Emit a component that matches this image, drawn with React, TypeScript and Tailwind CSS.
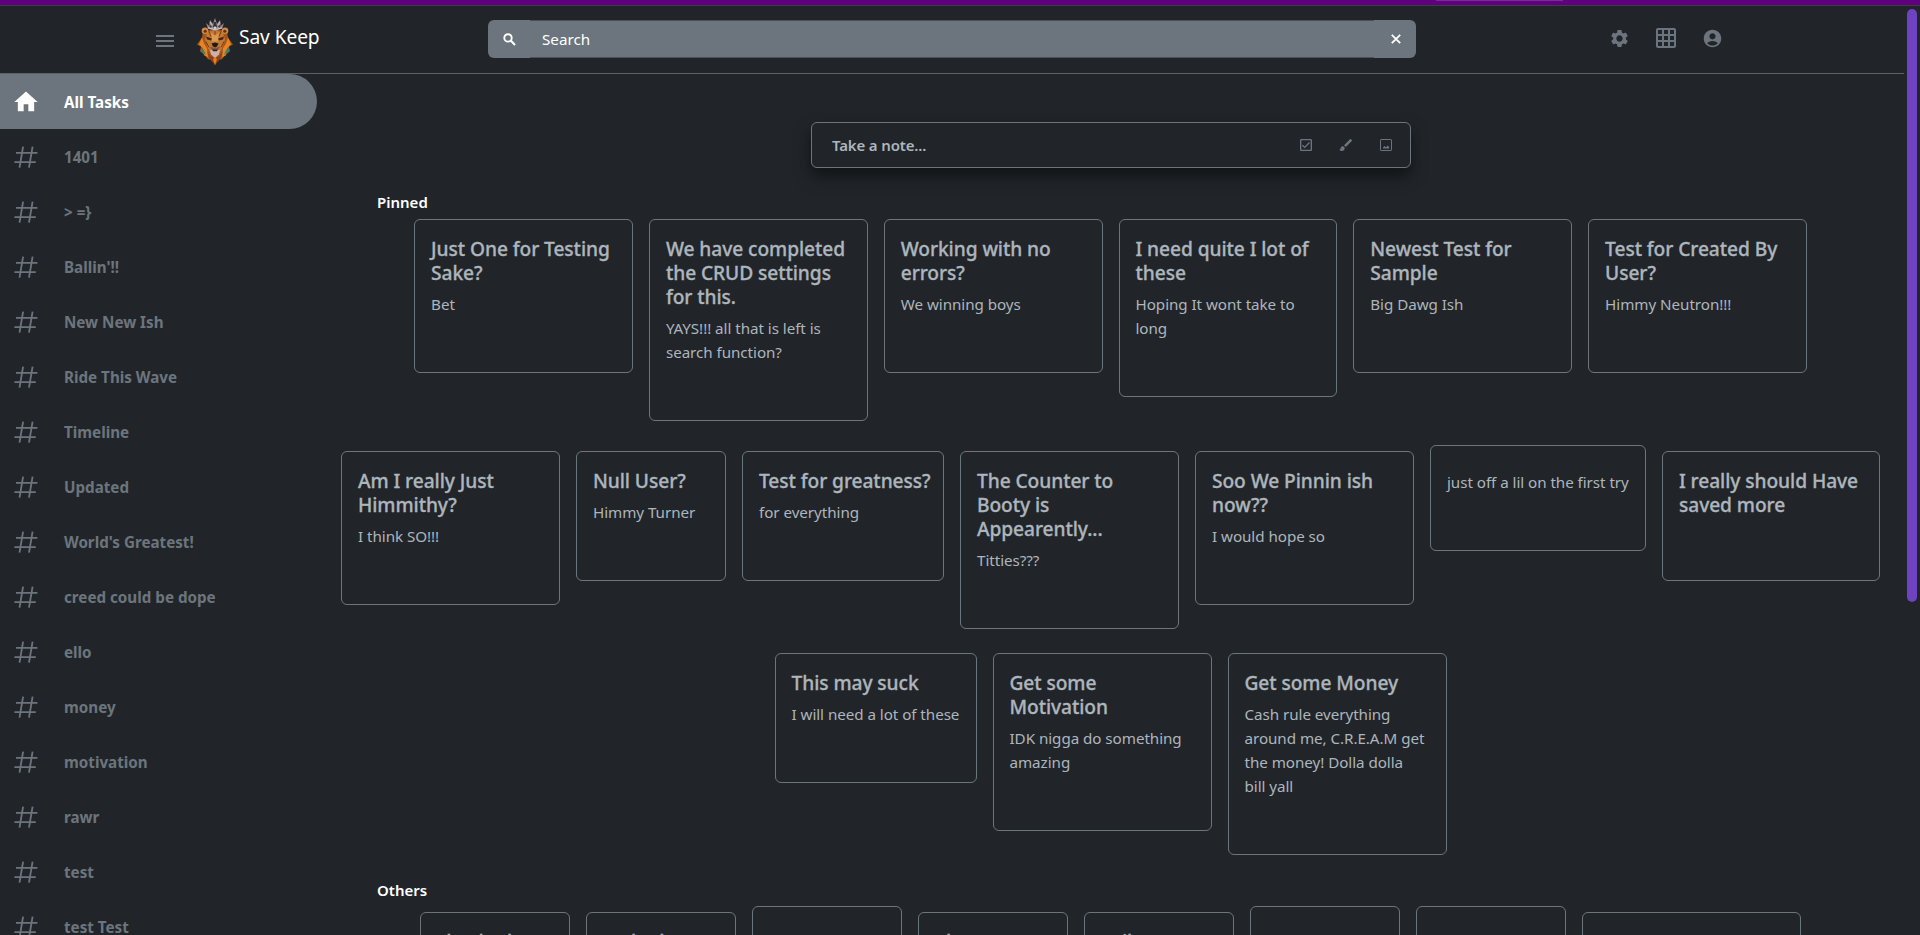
import React from "react";
import {
  MdMenu, MdSettings, MdGridOn, MdAccountCircle, MdHome,
  MdOutlineCheckBox, MdBrush,
} from "react-icons/md";

type Note = { title: string[]; body?: string[]; w: string };

const labels = [
  "1401", "> =}", "Ballin'!!", "New New Ish", "Ride This Wave", "Timeline", "Updated",
  "World's Greatest!", "creed could be dope", "ello", "money", "motivation", "rawr", "test", "test Test",
];

const rowOne: Note[] = [
  { w: "w-[218.8px]", title: ["Just One for Testing", "Sake?"], body: ["Bet"] },
  { w: "w-[218.8px]", title: ["We have completed", "the CRUD settings", "for this."], body: ["YAYS!!! all that is left is", "search function?"] },
  { w: "w-[218.8px]", title: ["Working with no", "errors?"], body: ["We winning boys"] },
  { w: "w-[218.8px]", title: ["I need quite I lot of", "these"], body: ["Hoping It wont take to", "long"] },
  { w: "w-[218.8px]", title: ["Newest Test for", "Sample"], body: ["Big Dawg Ish"] },
  { w: "w-[218.8px]", title: ["Test for Created By", "User?"], body: ["Himmy Neutron!!!"] },
];

const rowTwo: Note[] = [
  { w: "w-[219px]", title: ["Am I really Just", "Himmithy?"], body: ["I think SO!!!"] },
  { w: "w-[150px]", title: ["Null User?"], body: ["Himmy Turner"] },
  { w: "w-[202px]", title: ["Test for greatness?"], body: ["for everything"] },
  { w: "w-[219px]", title: ["The Counter to", "Booty is", "Appearently..."], body: ["Titties???"] },
  { w: "w-[219px]", title: ["Soo We Pinnin ish", "now??"], body: ["I would hope so"] },
  { w: "w-[216px]", title: [], body: ["just off a lil on the first try"] },
  { w: "w-[218px]", title: ["I really should Have", "saved more"] },
];

const rowThree: Note[] = [
  { w: "w-[202px]", title: ["This may suck"], body: ["I will need a lot of these"] },
  { w: "w-[219px]", title: ["Get some", "Motivation"], body: ["IDK nigga do something", "amazing"] },
  { w: "w-[219px]", title: ["Get some Money"], body: ["Cash rule everything", "around me, C.R.E.A.M get", "the money! Dolla dolla", "bill yall"] },
];

const others: Note[] = [
  { w: "w-[150px]", title: ["checked"] },
  { w: "w-[150px]", title: ["racked"] },
  { w: "w-[150px]", title: [], body: [] },
  { w: "w-[150px]", title: ["also"] },
  { w: "w-[150px]", title: ["soil"] },
  { w: "w-[150px]", title: [], body: [] },
  { w: "w-[150px]", title: [], body: [] },
  { w: "w-[219px]", title: [""] },
];

function Card({ note }: { note: Note }) {
  const lift = note.title.length === 0 ? "-mt-1.5" : "";
  return (
    <article className={`${note.w} ${lift} shrink-0 whitespace-nowrap rounded-md border border-[#6c757d] px-4 pt-[17px] pb-14 text-[#adb5bd]`}>
      <h5 className="mb-[7px] text-[19.2px] font-medium leading-6 tracking-[-0.08px] [-webkit-text-stroke:0.3px_#adb5bd]">
        {note.title.map((l) => <span key={l} className="block">{l}</span>)}
      </h5>
      <p className="text-[15.2px] leading-6 tracking-[-0.05px]">
        {note.body?.map((l) => <span key={l} className="block">{l}</span>)}
      </p>
    </article>
  );
}

function Row({ notes, className }: { notes: Note[]; className: string }) {
  return (
    <div className={`flex shrink-0 items-start justify-center ${className}`}>
      {notes.map((n, i) => <Card key={i} note={n} />)}
    </div>
  );
}

function Hash() {
  return (
    <svg className="ml-[14px] h-[22px] w-6 shrink-0" viewBox="0 0 24 22" fill="none" stroke="currentColor" strokeWidth="1.8">
      <path d="M9.100 .7 5.500 21.600M18.600 .7 15 21.600M2 6.800H23.400M.4 16.200H21.800" />
    </svg>
  );
}

function SearchIcon() {
  return (
    <svg className="size-[13px]" viewBox="0 0 13 13" fill="none" stroke="currentColor" strokeWidth="1.9">
      <circle cx="5" cy="4.900" r="3.700" />
      <path d="M7.700 7.600 12 12" strokeWidth="2.100" />
    </svg>
  );
}

function CloseIcon() {
  return (
    <svg className="ml-px size-[10px]" viewBox="0 0 10 10" fill="none" stroke="currentColor" strokeWidth="1.8">
      <path d="M.8 .8 9.200 9.200M9.200 .8 .8 9.200" />
    </svg>
  );
}

function Lion() {
  return (
    <svg className="h-[47px] w-[36px]" viewBox="0 0 36 48" preserveAspectRatio="none">
      <path d="M6 14 5 20 0 27 4 29 3 34 8 38 11 42 16 43 18 48 20 43 25 42 28 38 33 34 32 29 36 27 31 20 30 14 22 12H14Z" fill="#a3561c" />
      <path d="M5 20 2 27 6 31 7 38 11 40 10 31 7 26ZM31 20 34 27 30 31 29 38 25 40 26 31 29 26Z" fill="#e88421" />
      <path d="M4 31 7 33 9 38 4 34ZM32 31 29 33 27 38 32 34Z" fill="#2d8580" />
      <circle cx="8" cy="13" r="3.3" fill="#d18a45" /><circle cx="28" cy="13" r="3.3" fill="#d18a45" />
      <circle cx="8.2" cy="13.5" r="1.6" fill="#603018" /><circle cx="27.8" cy="13.5" r="1.6" fill="#603018" />
      <path d="M10 15 18 12 26 15 28 22 25 31 22 36 18 39 14 36 11 31 8 22Z" fill="#c47a32" />
      <path d="M14 15 18 18 22 15 21 24H15Z" fill="#dd9a4c" />
      <path d="M12 14 14 19M24 14 22 19M18 13V17M9 24 12 30M27 24 24 30" stroke="#7a3d18" strokeWidth="1" />
      <path d="M9 19 15 21 14 23 10 22ZM27 19 21 21 22 23 26 22Z" fill="#472619" />
      <path d="M14.5 26 18 25 21.5 26 20 29 18 30 16 29Z" fill="#1d1b20" />
      <path d="M13 29 18 31 23 29 22 32H14Z" fill="#8b543b" />
      <path d="M13 33 18 32 23 33 22 37 18 41 14 37Z" fill="#d0b0a8" />
      <path d="M15 32H21L20 34H16Z" fill="#33252a" />
      <path d="M10 34 14 39 18 41 22 39 26 34 23 42 18 48 13 42Z" fill="#8a4419" />
      <path d="M16 42 18 40 20 42 18 48Z" fill="#f17c18" />
      <path d="M9 5 12 8 13 2 16 6 18 0 20 6 23 2 24 8 27 5 25 11 18 13 11 11Z" fill="#9b8c8e" />
      <path d="M12 6 15 9 13 10ZM24 6 21 9 23 10ZM17 4H19L20 9 18 11 16 9Z" fill="#343239" />
      <path d="M13 4 15 7M23 4 21 7M11 10 18 12 25 10" stroke="#e5d6ce" fill="none" strokeWidth=".8" />
      <circle cx="18" cy="10" r="1.3" fill="#bddbe8" />
    </svg>
  );
}

function PortraitImage() {
  return (
    <svg className="size-4" viewBox="0 0 16 16" fill="none">
      <rect x="2.5" y="2.5" width="11" height="11" rx=".6" stroke="currentColor" />
      <path d="M5 11.500V10.500L6.500 9 8 10.300 9.800 8.500 11.200 10V11.500Z" fill="currentColor" />
    </svg>
  );
}

export default function App() {
  return (
    <div className="relative flex h-[935px] w-[1920px] flex-col overflow-hidden bg-[#212529] font-['Noto_Sans','Open_Sans',sans-serif] text-white">
      <div className="flex h-[6px] shrink-0 border-b border-[#3b3f43] bg-[#5f007f]">
        <div className="ml-[1436px] h-px w-[127px] bg-[#7b2b96]" />
      </div>
      <header className="flex h-[68px] w-[1904px] shrink-0 items-start border-b border-[#5c6166]">
        <MdMenu className="ml-[153px] mt-[23px] size-6 text-[#6c757d]" />
        <div className="ml-[20px] mt-[12px]"><Lion /></div>
        <h1 className="ml-[6px] mt-[16px] w-[120px] whitespace-nowrap text-[19.2px] leading-[30px] tracking-[-0.1px]">Sav Keep</h1>
        <div className="ml-[129px] mt-[14px] flex h-[38px] w-[928px] items-center rounded-md bg-[#6c757d]">
          <div className="flex w-[42px] justify-center"><SearchIcon /></div>
          <div className="flex h-full flex-1 items-center border-y border-[#495057] pl-3 text-[15.2px]">Search</div>
          <div className="flex w-[42px] justify-center"><CloseIcon /></div>
        </div>
        <nav className="ml-[193px] mt-[20px] flex items-center gap-[24px] text-[#6c757d]">
          <MdSettings className="size-[21px]" />
          <MdGridOn className="size-6" />
          <MdAccountCircle className="size-[21px]" />
        </nav>
      </header>
      <div className="flex min-h-0 flex-1">
        <aside className="flex w-[317px] shrink-0 flex-col overflow-hidden text-[15.2px] font-bold text-[#6c757d]">
          <div className="flex h-[55px] shrink-0 items-center rounded-r-full bg-[#6c757d] text-white">
            <MdHome className="ml-3 size-7" /><span className="ml-6 pt-px">All Tasks</span>
          </div>
          {labels.map((l) => (
            <div key={l} className="flex h-[55px] shrink-0 items-center">
              <Hash /><span className="ml-[26px] whitespace-nowrap pt-px">{l}</span>
            </div>
          ))}
        </aside>
        <main className="flex w-[1587px] flex-col overflow-hidden">
          <div className="ml-[494px] mt-[48px] flex h-[46px] w-[600px] shrink-0 items-center rounded-md border border-[#6c757d] pl-5 text-[#6c757d] shadow-[0_8px_16px_rgba(0,0,0,0.5)]">
            <span className="flex-1 text-[15px] font-semibold tracking-[-0.15px] text-[#adb5bd]">Take a note...</span>
            <div className="mr-4 flex items-center gap-6">
              <MdOutlineCheckBox className="size-4" />
              <MdBrush className="size-4" />
              <PortraitImage />
            </div>
          </div>
          <h2 className="ml-[60px] mt-[22px] shrink-0 text-[15px] font-semibold leading-6">Pinned</h2>
          <Row notes={rowOne} className="mt-[5px] h-[232px] gap-4" />
          <Row notes={rowTwo} className="h-[202px] gap-4" />
          <Row notes={rowThree} className="h-[225px] gap-4" />
          <h2 className="ml-[60px] shrink-0 text-[15px] font-semibold leading-6">Others</h2>
          <Row notes={others} className="mt-[10px] gap-4" />
        </main>
      </div>
      <div className="absolute left-[1907px] top-[9px] h-[593px] w-[10px] rounded-full bg-[#6f42c1]" />
    </div>
  );
}
